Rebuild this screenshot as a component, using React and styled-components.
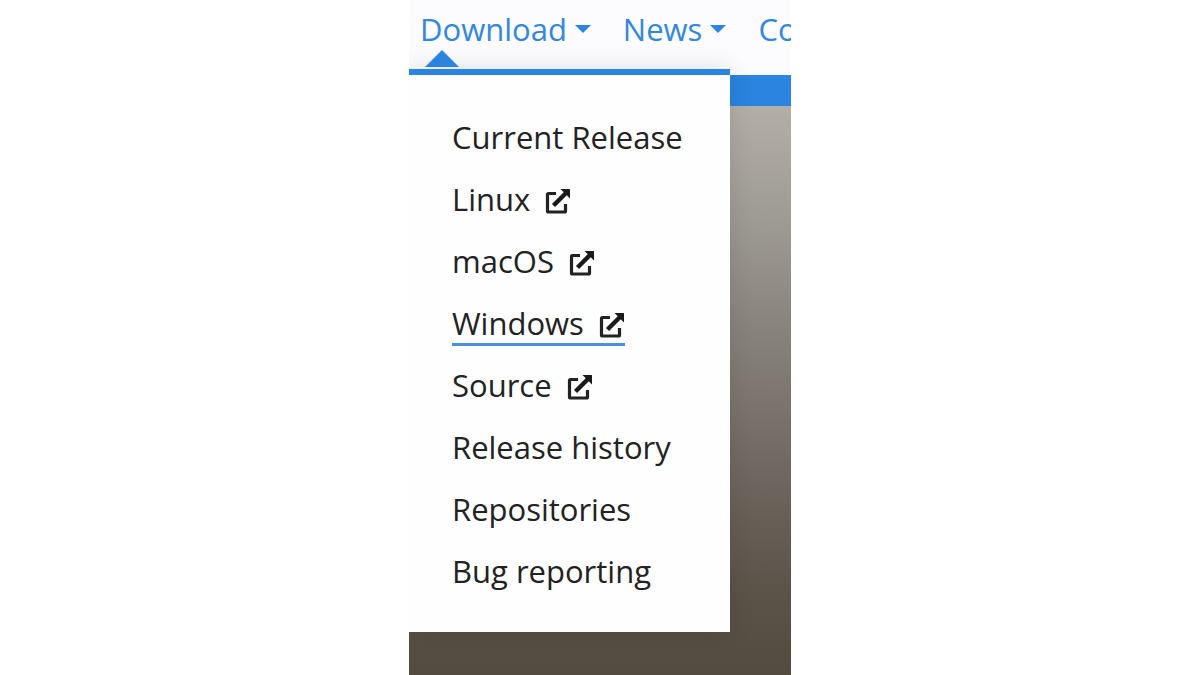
import React from 'react';
import styled, { createGlobalStyle } from 'styled-components';

const GlobalStyle = createGlobalStyle`
  body {
    margin: 0;
    background: #fff;
    font-family: "Open Sans", "Noto Sans", sans-serif;
  }
`;

const Page = styled.div`
  position: relative;
  display: flex;
  flex-direction: column;
  max-width: 382px;
  min-height: 100vh;
  margin: 0 auto;
  overflow: hidden;
`;

const Header = styled.header`
  box-sizing: border-box;
  height: 75px;
  padding: 9px 11px;
  background: #fcfcfe;
`;

const Nav = styled.nav`
  display: flex;
  gap: 32px;
`;

const NavLink = styled.a`
  display: flex;
  flex-shrink: 0;
  align-items: center;
  gap: 8px;
  color: #3287e0;
  font-size: 31px;
  line-height: 40px;
  text-decoration: none;

  &::after {
    content: "";
    border: 8px solid transparent;
    border-top-color: #2a84e0;
    border-bottom: 0;
  }
`;

const Strip = styled.div`
  height: 31px;
  background: #2a84e0;
`;

const Hero = styled.main`
  flex: 1;
  background: linear-gradient(#b3afa8 0%, #9c9892 22%, #8a847f 38%, #716a62 62%, #5c5349 85%, #544b40 100%);
`;

const Menu = styled.div`
  position: absolute;
  top: 69px;
  left: 0;
  box-sizing: border-box;
  width: 321px;
  padding: 32px 43px 29px;
  border-top: 6px solid #2a84e0;
  background: #fefefe;
  box-shadow: 0 0 24px rgba(0, 0, 0, 0.12);

  &::before {
    content: "";
    position: absolute;
    bottom: 100%;
    left: 16px;
    margin-bottom: 8px;
    border: 17px solid transparent;
    border-bottom-color: #2a84e0;
    border-top: 0;
  }
`;

const MenuList = styled.ul`
  margin: 0;
  padding: 0;
  list-style: none;
`;

const MenuItem = styled.li`
  display: flex;
  align-items: flex-start;
  height: 62px;
`;

const MenuLink = styled.a`
  display: flex;
  align-items: center;
  gap: 14px;
  padding: 10px 0 0;
  border-bottom: 3px solid ${({ $active }) => ($active ? '#4a90e2' : 'transparent')};
  color: #222;
  font-size: 31px;
  line-height: 40px;
  white-space: nowrap;
  text-decoration: none;
`;

const Icon = styled.svg`
  width: 27px;
  height: 27px;
  margin-top: 4px;
`;

const ExternalIcon = () => (
  <Icon viewBox="0 0 27 27" aria-hidden="true">
    <path
      d="M12 5.5H4.5Q3.5 5.5 3.5 6.5V23Q3.5 24 4.5 24H20.5Q21.5 24 21.5 23V16"
      fill="none"
      stroke="#222"
      strokeWidth="3.2"
    />
    <path d="M9.5 17.5 22 5" stroke="#1a1a1a" strokeWidth="4.4" />
    <path d="M16.5 1H25.5Q26 1 26 1.5V10.5z" fill="#1a1a1a" />
  </Icon>
);

const sections = ['Download', 'News', 'Co'];

const items = [
  { label: 'Current Release' },
  { label: 'Linux', external: true },
  { label: 'macOS', external: true },
  { label: 'Windows', external: true, active: true },
  { label: 'Source', external: true },
  { label: 'Release history' },
  { label: 'Repositories' },
  { label: 'Bug reporting' },
];

export default function App() {
  return (
    <>
      <GlobalStyle />
      <Page>
        <Header>
          <Nav>
            {sections.map((name) => (
              <NavLink key={name} href="#">{name}</NavLink>
            ))}
          </Nav>
        </Header>
        <Strip />
        <Hero />
        <Menu>
          <MenuList>
            {items.map(({ label, external, active }) => (
              <MenuItem key={label}>
                <MenuLink href="#" $active={active}>
                  {label}
                  {external && <ExternalIcon />}
                </MenuLink>
              </MenuItem>
            ))}
          </MenuList>
        </Menu>
      </Page>
    </>
  );
}
